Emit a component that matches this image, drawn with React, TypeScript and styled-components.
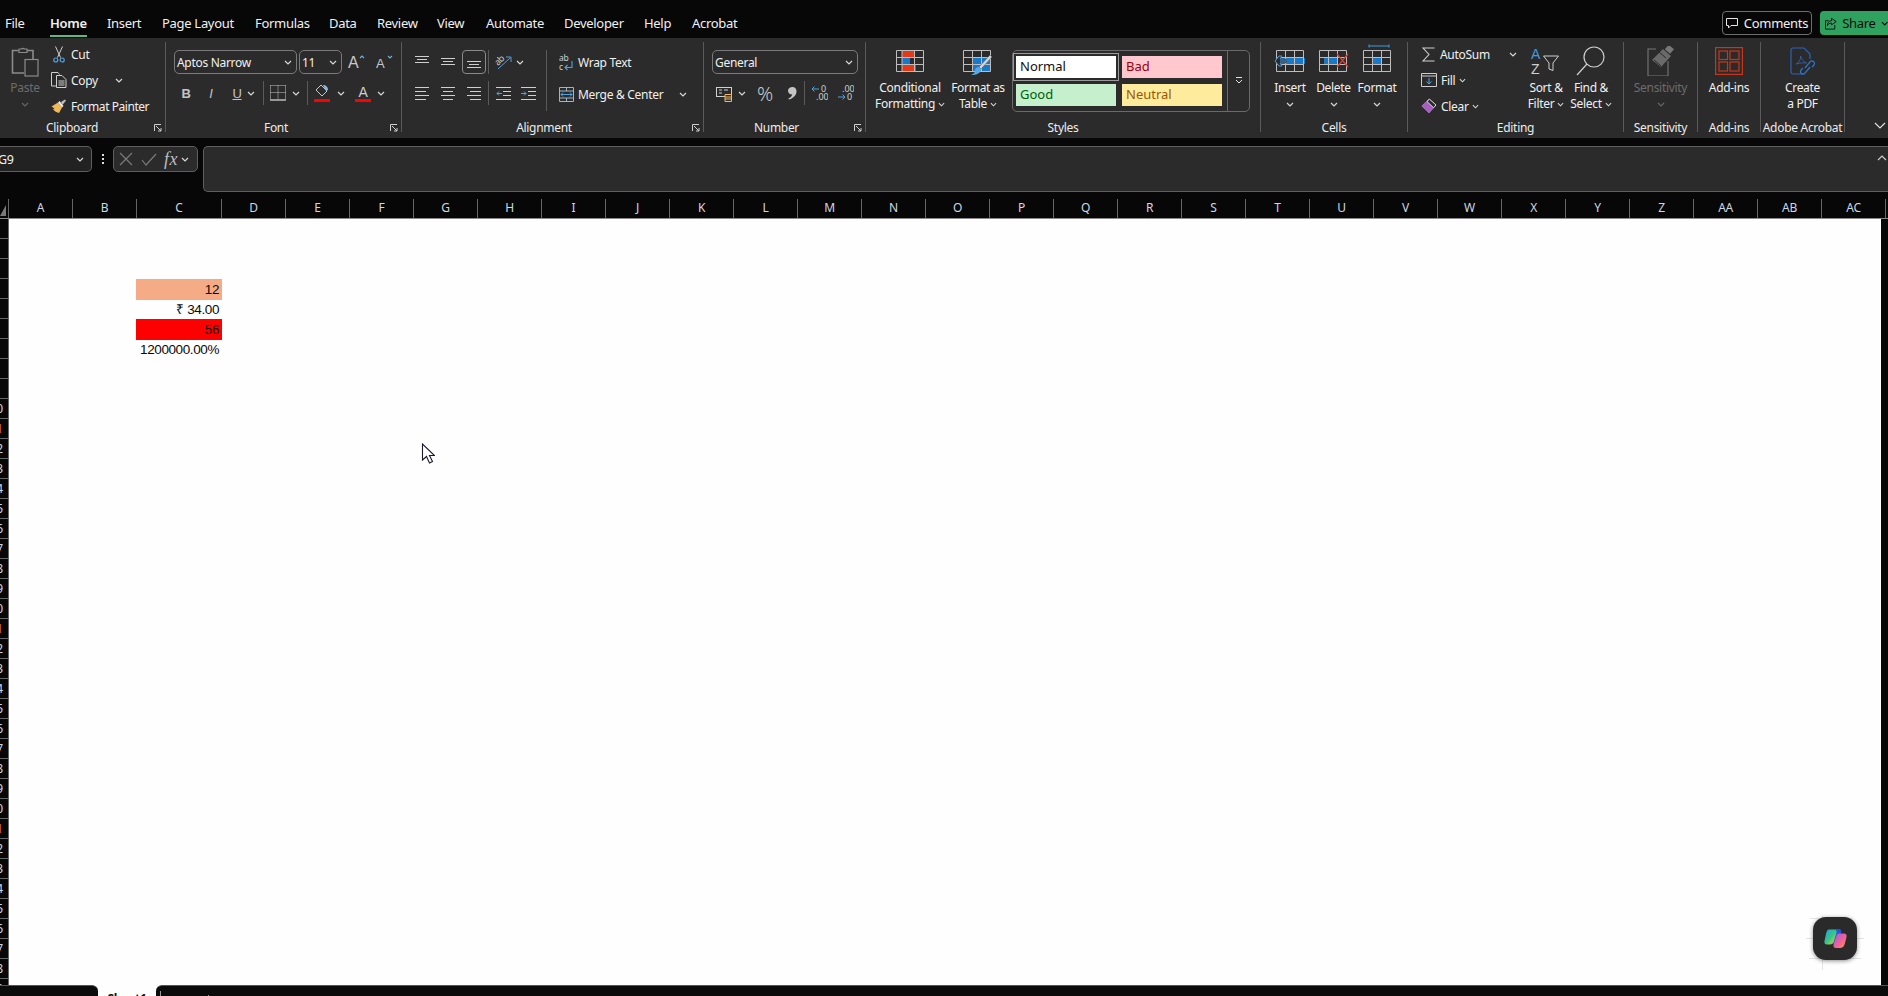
import React from 'react';
import styled, { createGlobalStyle } from 'styled-components';

const GlobalStyle = createGlobalStyle`
  html, body { margin: 0; padding: 0; background: #070707; }
  body { font-family: "Noto Sans", "Open Sans", sans-serif; overflow: hidden; }
`;

const Page = styled.div`
  position: relative;
  width: 1888px;
  height: 996px;
  display: flex;
  flex-direction: column;
  overflow: hidden;
  background: #070707;
  color: #f0f0f0;
  font-size: 12px;
  letter-spacing: -0.3px;
`;

const TitleBar = styled.div`
  height: 38px;
  display: flex;
  align-items: stretch;
  justify-content: space-between;
  padding-left: 5px;
`;

const TabList = styled.div`
  display: flex;
`;

const Tab = styled.div<{ $w: number; $active?: boolean }>`
  width: ${({ $w }) => $w}px;
  padding-top: 13px;
  font-size: 13px;
  line-height: 20px;
  letter-spacing: -0.3px;
  font-weight: ${({ $active }) => ($active ? 600 : 400)};
`;

const TabLabel = styled.span<{ $active?: boolean }>`
  display: inline-block;
  height: 22px;
  border-bottom: ${({ $active }) => ($active ? '2px solid #5fb583' : 'none')};
`;

const TitleActions = styled.div`
  display: flex;
  align-items: flex-start;
  gap: 8px;
  padding-top: 11px;
`;

const CommentsButton = styled.div`
  width: 90px;
  height: 24px;
  box-sizing: border-box;
  border: 1px solid #6e6e6e;
  border-radius: 4px;
  display: flex;
  align-items: center;
  justify-content: center;
  gap: 6px;
  font-size: 13px;
`;

const ShareButton = styled.div`
  width: 68px;
  height: 24px;
  background: #2fa25f;
  border-radius: 4px 0 0 4px;
  color: #0c0c0c;
  display: flex;
  align-items: center;
  gap: 5px;
  padding-left: 5px;
  box-sizing: border-box;
  font-size: 13px;
`;

const Ribbon = styled.div`
  height: 100px;
  box-sizing: border-box;
  padding-top: 4px;
  background: #2b2b2b;
  display: flex;
  position: relative;
`;

const Group = styled.div<{ $w: number }>`
  position: relative;
  width: ${({ $w }) => $w}px;
  height: 90px;
  flex: none;
  box-sizing: border-box;
  border-right: 1px solid #5a5a5a;
  display: flex;
  flex-direction: column;
`;

const GroupBody = styled.div<{ $pl?: number; $pt?: number; $gap?: number }>`
  height: 78px;
  flex: none;
  box-sizing: border-box;
  display: flex;
  padding-left: ${({ $pl }) => $pl ?? 0}px;
  padding-top: ${({ $pt }) => $pt ?? 0}px;
  gap: ${({ $gap }) => $gap ?? 0}px;
`;

const GroupLabel = styled.div<{ $pr?: number }>`
  height: 16px;
  line-height: 16px;
  padding-right: ${({ $pr }) => $pr ?? 0}px;
  text-align: center;
  color: #ececec;
  white-space: nowrap;
`;

const Launcher = styled.div`
  position: absolute;
  right: 3px;
  bottom: 0;
  width: 8px;
  height: 8px;
  line-height: 0;
`;

const Column = styled.div<{ $w?: number; $gap?: number; $ml?: number; $mt?: number }>`
  display: flex;
  flex-direction: column;
  flex: none;
  width: ${({ $w }) => ($w ? `${$w}px` : 'auto')};
  gap: ${({ $gap }) => $gap ?? 0}px;
  margin-left: ${({ $ml }) => $ml ?? 0}px;
  margin-top: ${({ $mt }) => $mt ?? 0}px;
`;

const SmallRow = styled.div<{ $dim?: boolean }>`
  height: 26px;
  display: flex;
  align-items: center;
  white-space: nowrap;
  color: ${({ $dim }) => ($dim ? '#777' : 'inherit')};
`;

const TightText = styled.span`
  letter-spacing: -0.45px;
`;

const ToolRow = styled.div<{ $h?: number }>`
  height: ${({ $h }) => $h ?? 24}px;
  display: flex;
  align-items: center;
  flex: none;
`;

const IconSlot = styled.div<{ $w: number; $ml?: number; $selected?: boolean; $h?: number }>`
  width: ${({ $w }) => $w}px;
  height: ${({ $h }) => $h ?? 24}px;
  margin-left: ${({ $ml }) => $ml ?? 0}px;
  flex: none;
  box-sizing: border-box;
  display: flex;
  align-items: center;
  justify-content: center;
  border: ${({ $selected }) => ($selected ? '1px solid #8a8a8a' : 'none')};
  border-radius: 4px;
`;

const Divider = styled.div<{ $ml: number; $mr?: number; $h?: number }>`
  width: 1px;
  height: ${({ $h }) => $h ?? 24}px;
  margin-left: ${({ $ml }) => $ml}px;
  margin-right: ${({ $mr }) => $mr ?? 0}px;
  background: #5a5a5a;
  flex: none;
`;

const TallDivider = styled.div<{ $ml: number }>`
  width: 1px;
  height: 61px;
  margin-left: ${({ $ml }) => $ml}px;
  background: #5a5a5a;
  flex: none;
`;

const Combo = styled.div<{ $w: number; $ml?: number }>`
  width: ${({ $w }) => $w}px;
  height: 24px;
  margin-left: ${({ $ml }) => $ml ?? 0}px;
  flex: none;
  box-sizing: border-box;
  border: 1px solid #7a7a7a;
  border-radius: 5px;
  padding: 0 4px 0 2px;
  display: flex;
  align-items: center;
  justify-content: space-between;
  font-size: 12px;
`;

const LargeButton = styled.div<{ $w: number; $dim?: boolean; $ml?: number }>`
  width: ${({ $w }) => $w}px;
  margin-left: ${({ $ml }) => $ml ?? 0}px;
  flex: none;
  display: flex;
  flex-direction: column;
  align-items: center;
  color: ${({ $dim }) => ($dim ? '#6c6c6c' : 'inherit')};
  white-space: nowrap;
`;

const LargeIcon = styled.div`
  height: 38px;
  width: 100%;
  display: flex;
  align-items: center;
  justify-content: center;
`;

const LabelLine = styled.div`
  height: 16px;
  line-height: 16px;
  display: flex;
  align-items: center;
  gap: 3px;
`;

const Gallery = styled.div`
  width: 238px;
  height: 62px;
  margin: 8px 0 0 3px;
  flex: none;
  box-sizing: border-box;
  border: 1px solid #6a6a6a;
  border-radius: 5px;
  display: flex;
`;

const StyleGrid = styled.div`
  width: 214px;
  display: grid;
  grid-template-columns: 100px 100px;
  grid-template-rows: 22px 22px;
  column-gap: 6px;
  row-gap: 6px;
  padding: 5px 0 0 3px;
  box-sizing: border-box;
`;

const StyleCell = styled.div<{ $bg: string; $fg: string; $outlined?: boolean }>`
  background: ${({ $bg }) => $bg};
  color: ${({ $fg }) => $fg};
  font-size: 13px;
  letter-spacing: 0;
  line-height: 21px;
  padding-left: 4px;
  outline: ${({ $outlined }) => ($outlined ? '1px solid #9a9a9a' : 'none')};
  outline-offset: 2px;
`;

const GalleryMore = styled.div`
  flex: 1;
  border-left: 1px solid #6a6a6a;
  display: flex;
  align-items: center;
  justify-content: center;
`;

const Expand = styled.div`
  position: absolute;
  right: 2px;
  bottom: 9px;
  line-height: 0;
`;

const FormulaRow = styled.div`
  height: 46px;
  margin-top: 8px;
  display: flex;
  align-items: flex-start;
  flex: none;
`;

const NameBox = styled.div`
  width: 92px;
  height: 26px;
  box-sizing: border-box;
  background: #222;
  border: 1px solid #5e5e5e;
  border-left: none;
  border-radius: 0 5px 5px 0;
  display: flex;
  align-items: center;
  justify-content: space-between;
  padding: 0 6px 0 0;
  font-size: 12.5px;
  overflow: hidden;
`;

const NameText = styled.span`
  margin-left: -2px;
`;

const Dots = styled.div`
  width: 21px;
  height: 26px;
  display: flex;
  flex-direction: column;
  align-items: center;
  justify-content: center;
  gap: 2px;
`;

const Dot = styled.i`
  width: 2px;
  height: 2px;
  background: #ddd;
`;

const FormulaTools = styled.div`
  width: 85px;
  height: 26px;
  box-sizing: border-box;
  background: #2b2b2b;
  border: 1px solid #5e5e5e;
  border-radius: 5px;
  display: flex;
  align-items: center;
  padding-left: 5px;
`;

const FxText = styled.span`
  font-family: "Liberation Serif", serif;
  font-style: italic;
  font-size: 18px;
  letter-spacing: 0.5px;
  color: #bdbdbd;
  margin: 0 2px 0 7px;
`;

const FormulaInput = styled.div`
  flex: 1;
  height: 46px;
  margin-left: 5px;
  box-sizing: border-box;
  background: #2b2b2b;
  border: 1px solid #5e5e5e;
  border-right: none;
  border-radius: 5px 0 0 5px;
  display: flex;
  justify-content: flex-end;
  padding: 8px 1px 0 0;
`;

const ColumnHeaders = styled.div`
  height: 20px;
  margin-top: 7px;
  display: flex;
  flex: none;
  box-sizing: border-box;
  border-bottom: 1px solid #8a8a8a;
`;

const CornerCell = styled.div`
  width: 9px;
  flex: none;
  box-sizing: border-box;
  border-right: 1px solid #666;
  line-height: 0;
  padding-top: 6px;
`;

const ColumnHead = styled.div<{ $w: number }>`
  width: ${({ $w }) => $w}px;
  flex: none;
  box-sizing: border-box;
  border-right: 1px solid #666;
  text-align: center;
  line-height: 18px;
  color: #cfd8e2;
  font-size: 12px;
`;

const Workspace = styled.div`
  flex: 1;
  display: flex;
  min-height: 0;
`;

const RowHeaders = styled.div`
  width: 9px;
  flex: none;
  overflow: hidden;
`;

const RowHead = styled.div<{ $accent: boolean }>`
  height: 20px;
  box-sizing: border-box;
  border-bottom: 1px solid #666;
  border-right: 1px solid #666;
  display: flex;
  justify-content: flex-end;
  padding-right: 5px;
  line-height: 19px;
  font-size: 12px;
  letter-spacing: 0;
  white-space: nowrap;
  color: ${({ $accent }) => ($accent ? '#d98a40' : '#cfd8e2')};
`;

const Sheet = styled.div`
  width: 1872px;
  flex: none;
  background: #fefefe;
  padding: 60px 0 0 127px;
  box-sizing: border-box;
`;

const SheetCell = styled.div<{ $bg?: string }>`
  width: 86px;
  height: ${({ $bg }) => ($bg ? 21 : 19)}px;
  box-sizing: border-box;
  padding-right: 3px;
  background: ${({ $bg }) => $bg ?? 'transparent'};
  color: #0a0a0a;
  text-align: right;
  font-family: "Liberation Sans", Arial, sans-serif;
  font-size: 13.5px;
  line-height: ${({ $bg }) => ($bg ? 22 : 20)}px;
  letter-spacing: -0.4px;
  white-space: nowrap;
`;

const SheetTabs = styled.div`
  height: 11px;
  flex: none;
  display: flex;
  background: #fefefe;
`;

const TabGutter = styled.div<{ $w?: number; $side: 'left' | 'right' }>`
  width: ${({ $w }) => ($w ? `${$w}px` : 'auto')};
  flex: ${({ $w }) => ($w ? 'none' : '1')};
  background: #0b0b0b;
  box-sizing: border-box;
  border-top: 1px solid #555;
  border-radius: ${({ $side }) => ($side === 'left' ? '0 6px 0 0' : '6px 0 0 0')};
  display: flex;
  align-items: flex-end;
  padding-left: ${({ $side }) => ($side === 'right' ? 4 : 0)}px;
`;

const TabTick = styled.i<{ $h: number; $ml?: number }>`
  width: 1px;
  height: ${({ $h }) => $h}px;
  margin-left: ${({ $ml }) => $ml ?? 0}px;
  background: #9a9a9a;
`;

const ActiveTab = styled.div`
  width: 58px;
  height: 11px;
  overflow: hidden;
  color: #111;
  font-weight: 700;
  font-size: 12px;
  line-height: 16px;
  text-align: center;
  padding-top: 6px;
  box-sizing: border-box;
`;

const Cursor = styled.div`
  position: absolute;
  left: 421px;
  top: 443px;
  line-height: 0;
`;

const CopilotMarks = styled.div`
  position: absolute;
  left: 1800px;
  top: 910px;
  line-height: 0;
`;

const CopilotButton = styled.div`
  position: absolute;
  left: 1813px;
  top: 917px;
  width: 44px;
  height: 43px;
  border-radius: 13px;
  background: #2a2a2a;
  box-shadow: 0 1px 4px rgba(0, 0, 0, 0.45);
  display: flex;
  align-items: center;
  justify-content: center;
`;

const Chevron = ({ color = '#d8d8d8', w = 8 }: { color?: string; w?: number }) => (
  <svg width={w} height={5} viewBox="0 0 8 5">
    <path d="M1 1l3 3 3-3" fill="none" stroke={color} strokeWidth="1.2" />
  </svg>
);

const LauncherIcon = () => (
  <svg width="8" height="8" viewBox="0 0 8 8" fill="none" stroke="#cfcfcf">
    <path d="M.5 7V.5H7M2 2l5 5M7 4v3H4" />
  </svg>
);

const PasteIcon = () => (
  <svg width="28" height="31" viewBox="0 0 28 31" fill="none" stroke="#8b8b8b" strokeWidth="1.2">
    <path d="M13 27H1.500V4.500h6M16 4.500h6V13" strokeWidth="1.6" />
    <path d="M8 6V3h2.500a2 2 0 0 1 3 0H16v3.500H8z" />
    <rect x="14" y="13.500" width="13" height="16.500" />
  </svg>
);

const CutIcon = () => (
  <svg width="12" height="17" viewBox="0 0 12 17" fill="none">
    <path d="M2.500 .5l5 11M9.500 .5l-5 11" stroke="#cfcfcf" />
    <circle cx="2.800" cy="14" r="2" stroke="#4fa3e0" strokeWidth="1.2" />
    <circle cx="9.200" cy="14" r="2" stroke="#4fa3e0" strokeWidth="1.2" />
  </svg>
);

const CopyIcon = () => (
  <svg width="16" height="16" viewBox="0 0 16 16" fill="none" stroke="#d0d0d0">
    <path d="M5 14H.5V.5H7l1.500 2" />
    <path d="M5.500 3.500H11l4 4v8H5.500zM7.500 9h6M7.500 11h6M7.500 13h6" />
  </svg>
);

const PainterIcon = () => (
  <svg width="16" height="15" viewBox="0 0 16 15">
    <path d="M.5 7.500L7 3.500l4 5-3 5.500C5 13 3 12 2 10l1.500-.5-3-2z" fill="#efb95a" />
    <path d="M7 3.500l4 5 1.500-1.500-4-5z" fill="#eee" />
    <path d="M10 3l4-2.500 1 1L11.500 6z" fill="#bdbdbd" />
  </svg>
);

const ToolLetter = styled.span<{ $weight?: number; $italic?: boolean; $underline?: boolean }>`
  font-family: "Liberation Sans", Arial, sans-serif;
  font-size: 13px;
  font-weight: ${({ $weight }) => $weight ?? 400};
  font-style: ${({ $italic }) => ($italic ? 'italic' : 'normal')};
  text-decoration: ${({ $underline }) => ($underline ? 'underline' : 'none')};
  color: #c4c4c4;
`;

const SizeIcon = ({ up }: { up: boolean }) => (
  <svg width="18" height="16" viewBox="0 0 18 16">
    <text x="0" y="14" fontSize={up ? 16 : 13} fontFamily="Liberation Sans" fill="#c8c8c8">A</text>
    <path d={up ? 'M12 4l2-2 2 2' : 'M12 2l2 2 2-2'} fill="none" stroke="#6fb1e0" strokeWidth="1.1" />
  </svg>
);

const BordersIcon = () => (
  <svg width="16" height="16" viewBox="0 0 16 16" fill="none" stroke="#c8c8c8">
    <path d="M.5.5h15M.5.5v14M15.500.5v14M.5 7.500h15M8 .5v14" strokeDasharray="1 1" />
    <path d="M0 15h16" strokeWidth="1.4" />
  </svg>
);

const FillIcon = () => (
  <svg width="16" height="18" viewBox="0 0 16 18">
    <path d="M7 1l6 6-5 5-6-6z" fill="none" stroke="#c8c8c8" />
    <path d="M9 1c3 0 5 2 5 5l-2 1z" fill="#8ab7dd" />
    <rect y="15" width="16" height="3" fill="#fe0000" />
  </svg>
);

const FontColorIcon = () => (
  <svg width="16" height="18" viewBox="0 0 16 18">
    <text x="8" y="12.500" textAnchor="middle" fontSize="14" fontFamily="Liberation Sans" fill="#cfcfcf">A</text>
    <rect y="15" width="16" height="3" fill="#fe0000" />
  </svg>
);

const Lines = ({ rows, w = 14 }: { rows: [number, number][]; w?: number }) => (
  <svg width={w} height="14" viewBox="0 0 14 14" stroke="#cfcfcf">
    {rows.map(([y, x], i) => (
      <path key={i} d={`M${x} ${y}.5H${14 - x}`} />
    ))}
  </svg>
);

const AlignLines = ({ side }: { side: 'left' | 'center' | 'right' }) => {
  const xs = [0, 1, 2, 3].map((i) => (i % 2 === 0 ? [0, 14] : side === 'left' ? [0, 11] : side === 'right' ? [3, 14] : [2, 12]));
  return (
    <svg width="14" height="14" viewBox="0 0 14 14" stroke="#cfcfcf">
      {xs.map(([a, b], i) => (
        <path key={i} d={`M${a} ${1 + i * 4}.5H${b}`} />
      ))}
    </svg>
  );
};

const OrientIcon = () => (
  <svg width="18" height="16" viewBox="0 0 18 16">
    <text transform="translate(3 12) rotate(-45)" fontSize="9" fontFamily="Noto Sans" fill="#cfcfcf">ab</text>
    <path d="M3 15L15 4M11 3h5v5" fill="none" stroke="#4fa3e0" />
  </svg>
);

const IndentIcon = ({ out }: { out: boolean }) => (
  <svg width="15" height="14" viewBox="0 0 15 14" fill="none">
    <path d="M0 1.500h15M7 5.500h8M7 9.500h8M0 13.500h15" stroke="#cfcfcf" />
    <path d={out ? 'M6 7.500H1M3 5.500l-2 2 2 2' : 'M0 7.500h5M3 5.500l2 2-2 2'} stroke="#4fa3e0" />
  </svg>
);

const WrapIcon = () => (
  <svg width="15" height="17" viewBox="0 0 15 17">
    <text x="0" y="7" fontSize="8.500" fontFamily="Noto Sans" fill="#cfcfcf">ab</text>
    <text x="0" y="16" fontSize="8.500" fontFamily="Noto Sans" fill="#cfcfcf">c</text>
    <path d="M13 7v6.500H6M8.500 11L6 13.500 8.500 16" fill="none" stroke="#4fa3e0" strokeWidth="1.1" />
  </svg>
);

const MergeIcon = () => (
  <svg width="15" height="15" viewBox="0 0 15 15" fill="none">
    <path d="M.5.5h14v14H.5zM.5 4h14M.5 11h14M7.500.5V4M7.500 11v3.500" stroke="#9fb6c9" />
    <path d="M2 7.500h11M4 5.500l-2 2 2 2M11 5.500l2 2-2 2" stroke="#4fa3e0" />
  </svg>
);

const CurrencyIcon = () => (
  <svg width="16" height="18" viewBox="0 0 16 18" fill="none">
    <rect x=".5" y="3.500" width="15" height="9" stroke="#cfcfcf" />
    <path d="M3 6h3M3 9h3M8 6h4" stroke="#cfcfcf" />
    <path d="M9 10.500h6.500v7H9z" fill="#2b2b2b" stroke="#f2b661" />
    <path d="M9 13h6.500M9 15h6.500" stroke="#f2b661" />
  </svg>
);

const BigPercent = styled.span`
  font-size: 20px;
  font-weight: 300;
  color: #c8c8c8;
  letter-spacing: 0;
`;

const CommaIcon = () => (
  <svg width="10" height="13" viewBox="0 0 10 13">
    <path d="M5.500 0C8 0 9.500 1.800 9.500 4.200c0 3.800-3 7-7.500 8.300l-.6-1C3.500 10.500 5 9 5.300 7.500 2.800 7.500 1 6 1 3.800 1 1.500 3 0 5.500 0z" fill="#c4c4c4" />
  </svg>
);

const DecimalIcon = ({ more }: { more: boolean }) => (
  <svg width="17" height="16" viewBox="0 0 17 16" fontSize="9" fontFamily="Noto Sans" fill="#cfcfcf" letterSpacing="0">
    <text x={more ? 10 : 5} y="7">{more ? '0' : '.00'}</text>
    <text x={more ? 5 : 10} y="15">{more ? '.00' : '0'}</text>
    {more ? (
      <path d="M8 4H1M3.500 1.500L1 4l2.500 2.500" fill="none" stroke="#4fa3e0" />
    ) : (
      <path d="M1 12h7M5.500 9.500L8 12l-2.500 2.500" fill="none" stroke="#4fa3e0" />
    )}
  </svg>
);

const GRID = '#bdbdbd';

const ConditionalIcon = () => (
  <svg width="29" height="22" viewBox="0 0 29 22">
    <rect x="6" y="1" width="12" height="6" fill="#e03a18" />
    <rect x="6" y="8" width="8" height="6" fill="#1978c8" />
    <rect x="6" y="15" width="14" height="6" fill="#e03a18" />
    <path d="M.5.5h27v21H.5zM.5 7.500h27M.5 14.500h27M6 .5v21M18.500.5v21" fill="none" stroke={GRID} />
  </svg>
);

const TableIcon = () => (
  <svg width="31" height="31" viewBox="0 -4 31 31">
    <rect x="10" y="8" width="18" height="13" fill="#1978c8" />
    <path d="M.5.5h27v21H.5zM.5 7.500h27M.5 14.500h27M9.500.5v21M18.500.5v21" fill="none" stroke={GRID} />
    <path d="M29 7L18 19l-2-2L27 5z" fill="#d5d5d5" stroke="#555" strokeWidth=".5" />
    <path d="M16 17l2 2c0 4-4 6-10 6 3-1 4-3 4-5 0-2 2-3 4-3z" fill="#5aa6e0" />
  </svg>
);

const InsertIcon = () => (
  <svg width="33" height="22" viewBox="0 0 33 22">
    <rect x="12" y="8" width="19" height="6" fill="#1978c8" />
    <path d="M2.500.5h27v21h-27zM2.500 7.500h27M2.500 14.500h27M11.500.5v21M20.500.5v21" fill="none" stroke={GRID} />
    <path d="M13 9H6l2-3H5l-4 5 4 5h3l-2-3h7M6 11h7" fill="#2b2b2b" stroke="#3f9be0" />
  </svg>
);

const DeleteIcon = () => (
  <svg width="30" height="22" viewBox="0 0 30 22">
    <rect x="5" y="8" width="14" height="6" fill="#1978c8" />
    <path d="M.5.5h27v21H.5zM.5 7.500h27M.5 14.500h27M9.500.5v21M18.500.5v21" fill="none" stroke={GRID} />
    <path d="M18 4l11 13M29 4L18 17" stroke="#e23b2e" strokeWidth="1.3" fill="none" />
  </svg>
);

const FormatIcon = () => (
  <svg width="28" height="34" viewBox="0 0 28 34">
    <path d="M6 2h20M6 .5v3M26 .5v3" stroke="#3f9be0" fill="none" />
    <rect x="9" y="14" width="9" height="6" fill="#1978c8" />
    <path d="M.5 6.500h27v21H.5zM.5 13.500h27M.5 20.500h27M9.500 6.500v21M18.500 6.500v21" fill="none" stroke={GRID} />
  </svg>
);

const SigmaIcon = () => (
  <svg width="13" height="15" viewBox="0 0 13 15" fill="none" stroke="#cfcfcf" strokeWidth="1.1">
    <path d="M12.500 1H1l6 6.500L1 14h11.500" />
  </svg>
);

const FillDownIcon = () => (
  <svg width="16" height="14" viewBox="0 0 16 14" fill="none">
    <path d="M.5.5h15v13H.5zM.5 3h15" stroke="#cfcfcf" />
    <path d="M8 5v6M5.500 8.500L8 11l2.500-2.500" stroke="#4fa3e0" />
  </svg>
);

const EraserIcon = () => (
  <svg width="16" height="16" viewBox="0 0 16 16">
    <path d="M.8 8L8 1l7 6-7 8z" fill="#a95fc0" stroke="#c98be0" strokeWidth=".6" />
    <path d="M6 3.500L8.500 1.200 15 7l-2.500 2.700z" fill="#2b2b2b" stroke="#d8d8d8" />
  </svg>
);

const SortIcon = () => (
  <svg width="30" height="28" viewBox="0 0 30 28">
    <text x="0" y="12" fontSize="14" fontFamily="Liberation Sans" fill="#3f9be0">A</text>
    <text x="0" y="27" fontSize="14" fontFamily="Liberation Sans" fill="#cfcfcf">Z</text>
    <path d="M12.500 9h15l-5.500 7v7.500l-4-1.500V16z" fill="none" stroke="#cfcfcf" />
  </svg>
);

const FindIcon = () => (
  <svg width="30" height="30" viewBox="0 0 30 30" fill="none" stroke="#cfcfcf" strokeWidth="1.2">
    <circle cx="18" cy="11" r="10" />
    <path d="M11 18L1 29" />
  </svg>
);

const SensitivityIcon = () => (
  <svg width="28" height="30" viewBox="0 0 28 30" fill="none" stroke="#777">
    <path d="M9 3H1v27h20V15" strokeWidth="1.1" />
    <path d="M5 14L16 3l8 7-10 11z" fill="#6a6a6a" stroke="none" />
    <path d="M7 14l7 6M12 6l7 6" stroke="#2b2b2b" />
    <rect x="19" y="0" width="7" height="6" fill="#777" stroke="none" transform="rotate(40 22 3)" />
  </svg>
);

const AddinsIcon = () => (
  <svg width="28" height="28" viewBox="0 0 28 28" fill="none" stroke="#c9351a" strokeWidth="1.2">
    <rect x=".6" y=".6" width="26.800" height="26.800" />
    <rect x="4" y="4" width="8.500" height="8.500" />
    <rect x="15" y="4" width="9" height="8.500" />
    <rect x="4" y="15" width="8.500" height="9" />
    <rect x="15" y="15" width="9" height="9" />
  </svg>
);

const AcrobatIcon = () => (
  <svg width="26" height="28" viewBox="0 0 26 28" fill="none" stroke="#2a62b8" strokeWidth="1.2">
    <path d="M15 27H3a2 2 0 0 1-2-2V3a2 2 0 0 1 2-2h11l6 6v5" />
    <path d="M6 17c3-1 5-5 4.500-8 1 3 3 6 6 7-3-.5-7 0-10.500 1z" strokeWidth=".9" />
    <path d="M15 21l5-6a2.500 2.500 0 0 1 4 3l-2 2M20 20l-5 6a2.500 2.500 0 0 1-4-3l2-2" stroke="#2f77d0" />
  </svg>
);

const CommentIcon = () => (
  <svg width="12" height="12" viewBox="0 0 12 12" fill="none" stroke="#e8e8e8">
    <path d="M.5 1.500h11v7H5L2.500 11V8.500h-2z" />
  </svg>
);

const ShareIcon = () => (
  <svg width="13" height="13" viewBox="0 0 13 13" fill="none" stroke="#111">
    <path d="M4 3.500H.5v9h10V8M7 1l5 3.500L7 8V6C4.500 6 3 7.500 2.500 9c0-3 1.500-5.500 4.500-5.500z" />
  </svg>
);

const ColumnNames = 'A B C D E F G H I J K L M N O P Q R S T U V W X Y Z AA AB AC'.split(' ');
const RowNumbers = Array.from({ length: 39 }, (_, i) => i + 1);

const tabs = [
  { name: 'File', w: 45 },
  { name: 'Home', w: 57, active: true },
  { name: 'Insert', w: 55 },
  { name: 'Page Layout', w: 93 },
  { name: 'Formulas', w: 74 },
  { name: 'Data', w: 48 },
  { name: 'Review', w: 60 },
  { name: 'View', w: 49 },
  { name: 'Automate', w: 78 },
  { name: 'Developer', w: 80 },
  { name: 'Help', w: 48 },
  { name: 'Acrobat', w: 60 },
];

const App: React.FC = () => (
  <Page>
    <GlobalStyle />
    <TitleBar>
      <TabList>
        {tabs.map((t) => (
          <Tab key={t.name} $w={t.w} $active={t.active}>
            <TabLabel $active={t.active}>{t.name}</TabLabel>
          </Tab>
        ))}
      </TabList>
      <TitleActions>
        <CommentsButton>
          <CommentIcon /> Comments
        </CommentsButton>
        <ShareButton>
          <ShareIcon /> Share <Chevron color="#111" />
        </ShareButton>
      </TitleActions>
    </TitleBar>

    <Ribbon>
      <Group $w={166}>
        <GroupBody $pl={10}>
          <LargeButton $w={30} $dim>
            <LargeIcon><PasteIcon /></LargeIcon>
            <LabelLine>Paste</LabelLine>
            <LabelLine><Chevron color="#666" /></LabelLine>
          </LargeButton>
          <Column $ml={11} $mt={-1}>
            <SmallRow>
              <IconSlot $w={16}><CutIcon /></IconSlot>
              <Column $ml={4}>Cut</Column>
            </SmallRow>
            <SmallRow>
              <IconSlot $w={16}><CopyIcon /></IconSlot>
              <Column $ml={4}>Copy</Column>
              <IconSlot $w={10} $ml={16}><Chevron /></IconSlot>
            </SmallRow>
            <SmallRow>
              <IconSlot $w={16}><PainterIcon /></IconSlot>
              <Column $ml={4}><TightText>Format Painter</TightText></Column>
            </SmallRow>
          </Column>
        </GroupBody>
        <GroupLabel $pr={21}>Clipboard</GroupLabel>
        <Launcher><LauncherIcon /></Launcher>
      </Group>

      <Group $w={236}>
        <GroupBody $pl={8} $pt={8}>
          <Column $gap={7}>
            <ToolRow>
              <Combo $w={123}>Aptos Narrow <Chevron /></Combo>
              <Combo $w={43} $ml={2}>11 <Chevron /></Combo>
              <IconSlot $w={20} $ml={5}><SizeIcon up /></IconSlot>
              <IconSlot $w={20} $ml={8}><SizeIcon up={false} /></IconSlot>
            </ToolRow>
            <ToolRow>
              <IconSlot $w={12} $ml={6}><ToolLetter $weight={700}>B</ToolLetter></IconSlot>
              <IconSlot $w={12} $ml={13}><ToolLetter $italic>I</ToolLetter></IconSlot>
              <IconSlot $w={12} $ml={14}><ToolLetter $underline>U</ToolLetter></IconSlot>
              <IconSlot $w={10} $ml={3}><Chevron /></IconSlot>
              <Divider $ml={7} />
              <IconSlot $w={16} $ml={6}><BordersIcon /></IconSlot>
              <IconSlot $w={10} $ml={5}><Chevron /></IconSlot>
              <Divider $ml={6} />
              <IconSlot $w={16} $ml={6}><FillIcon /></IconSlot>
              <IconSlot $w={10} $ml={6}><Chevron /></IconSlot>
              <IconSlot $w={16} $ml={9}><FontColorIcon /></IconSlot>
              <IconSlot $w={10} $ml={5}><Chevron /></IconSlot>
            </ToolRow>
          </Column>
        </GroupBody>
        <GroupLabel $pr={15}>Font</GroupLabel>
        <Launcher><LauncherIcon /></Launcher>
      </Group>

      <Group $w={302}>
        <GroupBody $pl={13} $pt={8}>
          <Column $gap={7}>
            <ToolRow>
              <IconSlot $w={14}><Lines rows={[[1, 0], [4, 2], [7, 0]]} /></IconSlot>
              <IconSlot $w={14} $ml={12}><Lines rows={[[3, 0], [6, 2], [9, 0]]} /></IconSlot>
              <IconSlot $w={24} $ml={7} $selected><Lines rows={[[6, 0], [9, 2], [12, 0]]} /></IconSlot>
              <Divider $ml={2} />
              <IconSlot $w={18} $ml={6}><OrientIcon /></IconSlot>
              <IconSlot $w={10} $ml={2}><Chevron /></IconSlot>
            </ToolRow>
            <ToolRow>
              <IconSlot $w={14}><AlignLines side="left" /></IconSlot>
              <IconSlot $w={14} $ml={12}><AlignLines side="center" /></IconSlot>
              <IconSlot $w={14} $ml={12}><AlignLines side="right" /></IconSlot>
              <Divider $ml={7} />
              <IconSlot $w={15} $ml={7}><IndentIcon out /></IconSlot>
              <IconSlot $w={15} $ml={10}><IndentIcon out={false} /></IconSlot>
            </ToolRow>
          </Column>
          <TallDivider $ml={10} />
          <Column $ml={12} $gap={8}>
            <ToolRow>
              <IconSlot $w={15}><WrapIcon /></IconSlot>
              <Column $ml={4}>Wrap Text</Column>
            </ToolRow>
            <ToolRow>
              <IconSlot $w={15}><MergeIcon /></IconSlot>
              <Column $ml={4} $w={90}>Merge &amp; Center</Column>
              <IconSlot $w={10} $ml={10}><Chevron /></IconSlot>
            </ToolRow>
          </Column>
        </GroupBody>
        <GroupLabel $pr={17}>Alignment</GroupLabel>
        <Launcher><LauncherIcon /></Launcher>
      </Group>

      <Group $w={162}>
        <GroupBody $pl={8} $pt={8}>
          <Column $gap={7}>
            <ToolRow>
              <Combo $w={146}>General <Chevron /></Combo>
            </ToolRow>
            <ToolRow>
              <IconSlot $w={16} $ml={4}><CurrencyIcon /></IconSlot>
              <IconSlot $w={10} $ml={5}><Chevron /></IconSlot>
              <IconSlot $w={18} $ml={9}><BigPercent>%</BigPercent></IconSlot>
              <IconSlot $w={12} $ml={12}><CommaIcon /></IconSlot>
              <Divider $ml={6} />
              <IconSlot $w={17} $ml={6}><DecimalIcon more /></IconSlot>
              <IconSlot $w={17} $ml={9}><DecimalIcon more={false} /></IconSlot>
            </ToolRow>
          </Column>
        </GroupBody>
        <GroupLabel $pr={16}>Number</GroupLabel>
        <Launcher><LauncherIcon /></Launcher>
      </Group>

      <Group $w={395}>
        <GroupBody $pl={7}>
          <LargeButton $w={74}>
            <LargeIcon><ConditionalIcon /></LargeIcon>
            <LabelLine>Conditional</LabelLine>
            <LabelLine>Formatting <Chevron w={7} /></LabelLine>
          </LargeButton>
          <LargeButton $w={62}>
            <LargeIcon><TableIcon /></LargeIcon>
            <LabelLine>Format as</LabelLine>
            <LabelLine>Table <Chevron w={7} /></LabelLine>
          </LargeButton>
          <Gallery>
            <StyleGrid>
              <StyleCell $bg="#ffffff" $fg="#111" $outlined>Normal</StyleCell>
              <StyleCell $bg="#ffc7ce" $fg="#9c0006">Bad</StyleCell>
              <StyleCell $bg="#c6efce" $fg="#006100">Good</StyleCell>
              <StyleCell $bg="#ffeb9c" $fg="#9c5700">Neutral</StyleCell>
            </StyleGrid>
            <GalleryMore>
              <svg width="8" height="8" viewBox="0 0 8 8" fill="none" stroke="#e0e0e0">
                <path d="M1 .5h6M1 3l3 3 3-3" />
              </svg>
            </GalleryMore>
          </Gallery>
        </GroupBody>
        <GroupLabel>Styles</GroupLabel>
      </Group>

      <Group $w={147}>
        <GroupBody $pl={7}>
          <LargeButton $w={44}>
            <LargeIcon><InsertIcon /></LargeIcon>
            <LabelLine>Insert</LabelLine>
            <LabelLine><Chevron /></LabelLine>
          </LargeButton>
          <LargeButton $w={43}>
            <LargeIcon><DeleteIcon /></LargeIcon>
            <LabelLine>Delete</LabelLine>
            <LabelLine><Chevron /></LabelLine>
          </LargeButton>
          <LargeButton $w={44}>
            <LargeIcon><FormatIcon /></LargeIcon>
            <LabelLine>Format</LabelLine>
            <LabelLine><Chevron /></LabelLine>
          </LargeButton>
        </GroupBody>
        <GroupLabel>Cells</GroupLabel>
      </Group>

      <Group $w={216}>
        <GroupBody $pl={13}>
          <Column $w={103} $mt={-1}>
            <SmallRow>
              <IconSlot $w={14}><SigmaIcon /></IconSlot>
              <Column $ml={5} $w={68}>AutoSum</Column>
              <IconSlot $w={10}><Chevron /></IconSlot>
            </SmallRow>
            <SmallRow>
              <IconSlot $w={16}><FillDownIcon /></IconSlot>
              <Column $ml={4}>Fill</Column>
              <IconSlot $w={8} $ml={3}><Chevron w={7} /></IconSlot>
            </SmallRow>
            <SmallRow>
              <IconSlot $w={16}><EraserIcon /></IconSlot>
              <Column $ml={4}>Clear</Column>
              <IconSlot $w={8} $ml={3}><Chevron w={7} /></IconSlot>
            </SmallRow>
          </Column>
          <LargeButton $w={46} $ml={-1}>
            <LargeIcon><SortIcon /></LargeIcon>
            <LabelLine>Sort &amp;</LabelLine>
            <LabelLine>Filter <Chevron w={7} /></LabelLine>
          </LargeButton>
          <LargeButton $w={44}>
            <LargeIcon><FindIcon /></LargeIcon>
            <LabelLine>Find &amp;</LabelLine>
            <LabelLine>Select <Chevron w={7} /></LabelLine>
          </LargeButton>
        </GroupBody>
        <GroupLabel>Editing</GroupLabel>
      </Group>

      <Group $w={74}>
        <GroupBody>
          <LargeButton $w={73} $dim>
            <LargeIcon><SensitivityIcon /></LargeIcon>
            <LabelLine>Sensitivity</LabelLine>
            <LabelLine><Chevron color="#666" /></LabelLine>
          </LargeButton>
        </GroupBody>
        <GroupLabel>Sensitivity</GroupLabel>
      </Group>

      <Group $w={63}>
        <GroupBody>
          <LargeButton $w={62}>
            <LargeIcon><AddinsIcon /></LargeIcon>
            <LabelLine>Add-ins</LabelLine>
          </LargeButton>
        </GroupBody>
        <GroupLabel>Add-ins</GroupLabel>
      </Group>

      <Group $w={84}>
        <GroupBody>
          <LargeButton $w={83}>
            <LargeIcon><AcrobatIcon /></LargeIcon>
            <LabelLine>Create</LabelLine>
            <LabelLine>a PDF</LabelLine>
          </LargeButton>
        </GroupBody>
        <GroupLabel>Adobe Acrobat</GroupLabel>
      </Group>

      <Expand>
        <svg width="12" height="7" viewBox="0 0 12 7" fill="none" stroke="#e0e0e0" strokeWidth="1.2">
          <path d="M1 1l5 5 5-5" />
        </svg>
      </Expand>
    </Ribbon>

    <FormulaRow>
      <NameBox>
        <NameText>G9</NameText>
        <Chevron w={10} />
      </NameBox>
      <Dots><Dot /><Dot /><Dot /></Dots>
      <FormulaTools>
        <svg width="14" height="14" viewBox="0 0 14 14" fill="none" stroke="#7a7a7a" strokeWidth="1.2">
          <path d="M1 1l12 12M13 1L1 13" />
        </svg>
        <svg width="16" height="13" viewBox="0 0 16 13" fill="none" stroke="#7a7a7a" strokeWidth="1.2" style={{ marginLeft: 8 }}>
          <path d="M1 7l4 5L15 1" />
        </svg>
        <FxText>fx</FxText>
        <Chevron w={10} />
      </FormulaTools>
      <FormulaInput>
        <svg width="10" height="6" viewBox="0 0 10 6" fill="none" stroke="#d0d0d0" strokeWidth="1.1">
          <path d="M1 5l4-4 4 4" />
        </svg>
      </FormulaInput>
    </FormulaRow>

    <ColumnHeaders>
      <CornerCell>
        <svg width="6" height="11" viewBox="0 0 6 11"><path d="M6 0v11H0z" fill="#7a7a7a" /></svg>
      </CornerCell>
      {ColumnNames.map((name) => (
        <ColumnHead key={name} $w={name === 'C' ? 85 : 64}>{name}</ColumnHead>
      ))}
    </ColumnHeaders>

    <Workspace>
      <RowHeaders>
        {RowNumbers.map((n) => (
          <RowHead key={n} $accent={n > 10 && n % 10 === 1}>{n >= 10 ? n : ''}</RowHead>
        ))}
      </RowHeaders>
      <Sheet>
        <SheetCell $bg="#f4ab86">12</SheetCell>
        <SheetCell>₹ 34.00</SheetCell>
        <SheetCell $bg="#ff0000">56</SheetCell>
        <SheetCell>1200000.00%</SheetCell>
      </Sheet>
    </Workspace>

    <SheetTabs>
      <TabGutter $w={98} $side="left" />
      <ActiveTab>Sheet1</ActiveTab>
      <TabGutter $side="right">
        <TabTick $h={5} />
        <TabTick $h={1} $ml={47} />
      </TabGutter>
    </SheetTabs>

    <Cursor>
      <svg width="14" height="22" viewBox="0 0 14 22">
        <path d="M1.500 1v16l4-3.500 3 6.500 3-1.500-3-6h5z" fill="#fff" stroke="#1a1a2e" strokeWidth="1.100" />
      </svg>
    </Cursor>

    <CopilotMarks>
      <svg width="70" height="70" viewBox="0 0 70 70" stroke="#e4e4e4" fill="none">
        <path d="M22.500 6v54M6 28.500h8M57 28.500h7M10 8.500h42M9 48.500h52" />
      </svg>
    </CopilotMarks>
    <CopilotButton>
      <svg width="23" height="21" viewBox="0 0 23 21">
        <defs>
          <linearGradient id="lobeA" x1="0" y1="0" x2="1" y2="1">
            <stop offset="0" stopColor="#1fa3ea" />
            <stop offset="0.5" stopColor="#35c48a" />
            <stop offset="1" stopColor="#f2d21f" />
          </linearGradient>
          <linearGradient id="lobeB" x1="0" y1="0" x2="1" y2="1">
            <stop offset="0" stopColor="#a35be0" />
            <stop offset="0.55" stopColor="#f0609a" />
            <stop offset="1" stopColor="#f7a13a" />
          </linearGradient>
        </defs>
        <path d="M11 1h3c3 0 4 2 3 4l-5 11H8L10 7l1-6z" fill="#2456d8" />
        <path d="M5 1.500h5c2 0 3 1.500 2.500 3L10 13c-.6 2-2 3.500-4 3.500H3c-2 0-3-1.500-2.500-3.500L2 6c.5-2.500 1.500-4.500 3-4.500z" fill="url(#lobeA)" />
        <path d="M15 5.500h5c2 0 3 1.500 2.500 3.500L21 15c-.5 2.500-2 5-4.500 5H12c-2 0-3-1.500-2.500-3L12 9c.5-2 1.500-3.500 3-3.500z" fill="url(#lobeB)" />
      </svg>
    </CopilotButton>
  </Page>
);

export default App;
